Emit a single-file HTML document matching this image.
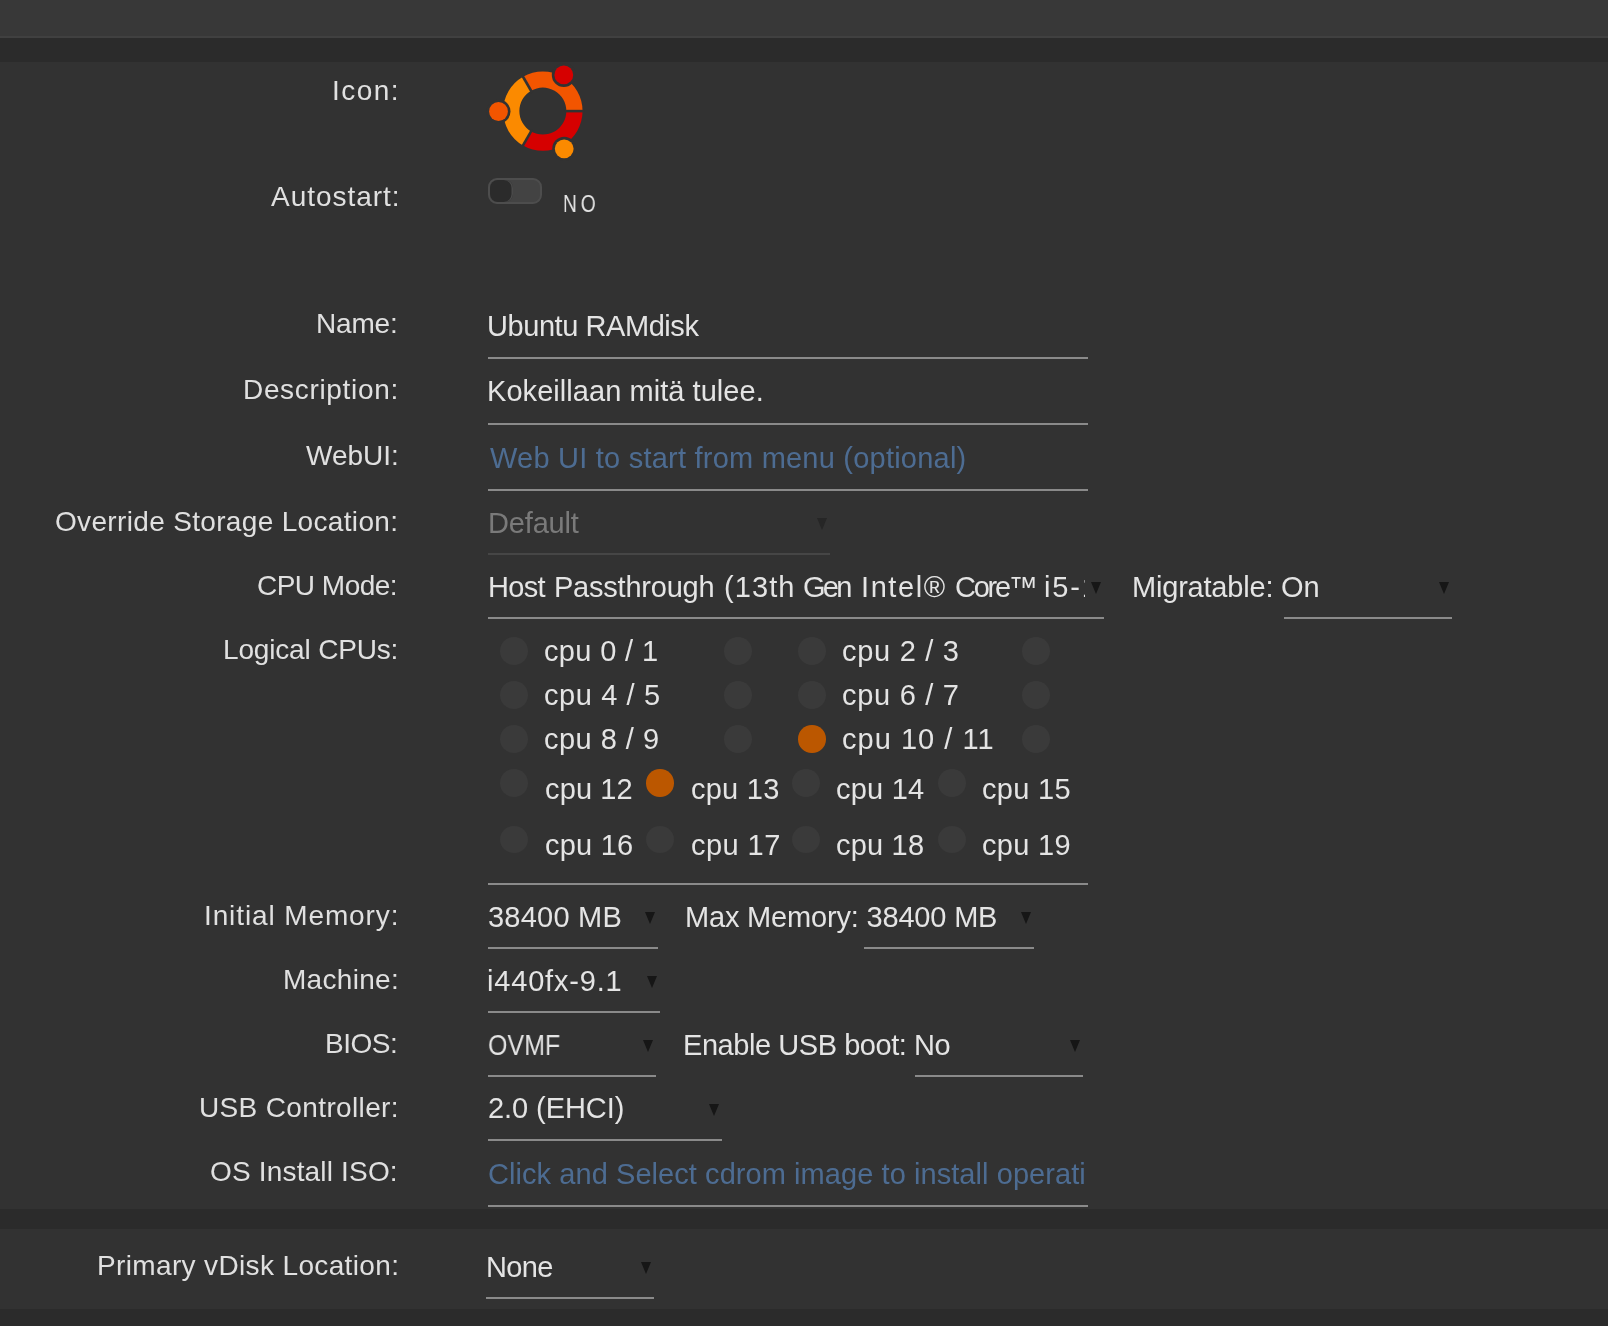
<!DOCTYPE html>
<html><head><meta charset="utf-8"><style>
html,body{margin:0;padding:0;width:1608px;height:1326px;overflow:hidden;background:#323232;}
body{position:relative;font-family:"Liberation Sans",sans-serif;}
.t{position:absolute;white-space:nowrap;line-height:1;will-change:transform;}
.r{position:absolute;box-sizing:content-box;}
.clip{position:absolute;overflow:hidden;}
</style></head><body>
<div class="r" style="left:0px;top:0px;width:1608px;height:36px;background:#383838;"></div>
<div class="r" style="left:0px;top:36px;width:1608px;height:2px;background:#404040;"></div>
<div class="r" style="left:0px;top:38px;width:1608px;height:24px;background:#2b2b2b;"></div>
<div class="r" style="left:0px;top:62px;width:1608px;height:1147px;background:#323232;"></div>
<div class="r" style="left:0px;top:1209px;width:1608px;height:20px;background:#2b2b2b;"></div>
<div class="r" style="left:0px;top:1229px;width:1608px;height:80px;background:#323232;"></div>
<div class="r" style="left:0px;top:1309px;width:1608px;height:17px;background:#2b2b2b;"></div>
<div class="t" id="l_icon" style="right:1207.94px;top:77.00px;font-size:28px;color:#e0e0e0;letter-spacing:1.465px;">Icon:</div>
<div class="t" id="l_auto" style="right:1208.00px;top:182.80px;font-size:28px;color:#e0e0e0;letter-spacing:0.965px;">Autostart:</div>
<div class="t" id="l_name" style="right:1210.08px;top:309.70px;font-size:28px;color:#e0e0e0;letter-spacing:-0.190px;">Name:</div>
<div class="t" id="l_desc" style="right:1208.81px;top:375.90px;font-size:28px;color:#e0e0e0;letter-spacing:0.666px;">Description:</div>
<div class="t" id="l_web" style="right:1208.98px;top:441.60px;font-size:28px;color:#e0e0e0;letter-spacing:-0.030px;">WebUI:</div>
<div class="t" id="l_ovr" style="right:1209.67px;top:507.70px;font-size:28px;color:#e0e0e0;letter-spacing:0.334px;">Override Storage Location:</div>
<div class="t" id="l_cpum" style="right:1210.42px;top:572.20px;font-size:28px;color:#e0e0e0;letter-spacing:-0.512px;">CPU Mode:</div>
<div class="t" id="l_lcpu" style="right:1209.62px;top:635.90px;font-size:28px;color:#e0e0e0;letter-spacing:-0.167px;">Logical CPUs:</div>
<div class="t" id="l_imem" style="right:1208.55px;top:901.60px;font-size:28px;color:#e0e0e0;letter-spacing:0.885px;">Initial Memory:</div>
<div class="t" id="l_mach" style="right:1209.18px;top:965.70px;font-size:28px;color:#e0e0e0;letter-spacing:0.292px;">Machine:</div>
<div class="t" id="l_bios" style="right:1210.45px;top:1030.40px;font-size:28px;color:#e0e0e0;letter-spacing:-0.500px;">BIOS:</div>
<div class="t" id="l_usb" style="right:1209.10px;top:1093.80px;font-size:28px;color:#e0e0e0;letter-spacing:0.360px;">USB Controller:</div>
<div class="t" id="l_iso" style="right:1209.76px;top:1157.70px;font-size:28px;color:#e0e0e0;letter-spacing:0.177px;">OS Install ISO:</div>
<div class="t" id="l_vdisk" style="right:1209.09px;top:1252.20px;font-size:28px;color:#e0e0e0;letter-spacing:0.359px;">Primary vDisk Location:</div>
<div class="t" id="v_name" style="left:487.35px;top:311.75px;font-size:29px;color:#e4e4e4;letter-spacing:-0.436px;">Ubuntu RAMdisk</div>
<div class="r" style="left:488px;top:357px;width:600px;height:2px;background:#8a8a8a;"></div>
<div class="t" id="v_desc" style="left:487.35px;top:376.65px;font-size:29px;color:#e4e4e4;letter-spacing:0.052px;">Kokeillaan mitä tulee.</div>
<div class="r" style="left:488px;top:423px;width:600px;height:2px;background:#8a8a8a;"></div>
<div class="t" id="v_web" style="left:489.55px;top:443.75px;font-size:29px;color:#4d6c92;letter-spacing:0.222px;">Web UI to start from menu (optional)</div>
<div class="r" style="left:488px;top:489px;width:600px;height:2px;background:#8a8a8a;"></div>
<div class="t" id="v_def" style="left:487.55px;top:509.05px;font-size:29px;color:#7a7a7a;letter-spacing:-0.167px;">Default</div>
<div class="r" style="left:817px;top:518px;width:0;height:0;border-left:5.5px solid transparent;border-right:5.5px solid transparent;border-top:12px solid #262626;"></div>
<div class="r" style="left:488px;top:553px;width:342px;height:2px;background:#464646;"></div>
<div class="clip" style="left:488px;top:567.45px;width:597px;height:44px;"><div class="t" style="left:0.30px;top:6px;font-size:29px;color:#e4e4e4;letter-spacing:-0.666px">Host</div><div class="t" style="left:66.40px;top:6px;font-size:29px;color:#e4e4e4;letter-spacing:-0.220px">Passthrough</div><div class="t" style="left:236.30px;top:6px;font-size:29px;color:#e4e4e4;letter-spacing:1.100px">(13th</div><div class="t" style="left:315.40px;top:6px;font-size:29px;color:#e4e4e4;letter-spacing:-2.700px">Gen</div><div class="t" style="left:372.80px;top:6px;font-size:29px;color:#e4e4e4;letter-spacing:1.580px">Intel®</div><div class="t" style="left:467.30px;top:6px;font-size:29px;color:#e4e4e4;letter-spacing:-2.250px">Core™</div><div class="t" style="left:556.10px;top:6px;font-size:29px;color:#e4e4e4;letter-spacing:1.850px">i5-13600K)</div></div>
<div class="r" style="left:1091px;top:582px;width:0;height:0;border-left:5.5px solid transparent;border-right:5.5px solid transparent;border-top:12px solid #161616;"></div>
<div class="r" style="left:488px;top:617px;width:616px;height:2px;background:#8a8a8a;"></div>
<div class="t" id="v_migr" style="left:1131.60px;top:573.25px;font-size:29px;color:#e4e4e4;letter-spacing:-0.200px;">Migratable: On</div>
<div class="r" style="left:1439px;top:582px;width:0;height:0;border-left:5.5px solid transparent;border-right:5.5px solid transparent;border-top:12px solid #161616;"></div>
<div class="r" style="left:1284px;top:617px;width:168px;height:2px;background:#8a8a8a;"></div>
<div class="r" style="left:500.40px;top:637.20px;width:27.6px;height:27.6px;border-radius:50%;background:#3a3a3a;"></div>
<div class="r" style="left:724.40px;top:637.20px;width:27.6px;height:27.6px;border-radius:50%;background:#3a3a3a;"></div>
<div class="t" id="c00" style="left:544.45px;top:637.25px;font-size:29px;color:#e4e4e4;letter-spacing:0.348px;">cpu 0 / 1</div>
<div class="r" style="left:798.40px;top:637.20px;width:27.6px;height:27.6px;border-radius:50%;background:#3a3a3a;"></div>
<div class="r" style="left:1022.40px;top:637.20px;width:27.6px;height:27.6px;border-radius:50%;background:#3a3a3a;"></div>
<div class="t" id="c01" style="left:841.80px;top:637.25px;font-size:29px;color:#e4e4e4;letter-spacing:0.713px;">cpu 2 / 3</div>
<div class="r" style="left:500.40px;top:681.20px;width:27.6px;height:27.6px;border-radius:50%;background:#3a3a3a;"></div>
<div class="r" style="left:724.40px;top:681.20px;width:27.6px;height:27.6px;border-radius:50%;background:#3a3a3a;"></div>
<div class="t" id="c10" style="left:544.45px;top:681.25px;font-size:29px;color:#e4e4e4;letter-spacing:0.598px;">cpu 4 / 5</div>
<div class="r" style="left:798.40px;top:681.20px;width:27.6px;height:27.6px;border-radius:50%;background:#3a3a3a;"></div>
<div class="r" style="left:1022.40px;top:681.20px;width:27.6px;height:27.6px;border-radius:50%;background:#3a3a3a;"></div>
<div class="t" id="c11" style="left:841.80px;top:681.25px;font-size:29px;color:#e4e4e4;letter-spacing:0.713px;">cpu 6 / 7</div>
<div class="r" style="left:500.40px;top:725.20px;width:27.6px;height:27.6px;border-radius:50%;background:#3a3a3a;"></div>
<div class="r" style="left:724.40px;top:725.20px;width:27.6px;height:27.6px;border-radius:50%;background:#3a3a3a;"></div>
<div class="t" id="c20" style="left:544.45px;top:725.35px;font-size:29px;color:#e4e4e4;letter-spacing:0.473px;">cpu 8 / 9</div>
<div class="r" style="left:798.40px;top:725.20px;width:27.6px;height:27.6px;border-radius:50%;background:#bb5700;"></div>
<div class="r" style="left:1022.40px;top:725.20px;width:27.6px;height:27.6px;border-radius:50%;background:#3a3a3a;"></div>
<div class="t" id="c21" style="left:841.80px;top:725.35px;font-size:29px;color:#e4e4e4;letter-spacing:1.030px;">cpu 10 / 11</div>
<div class="r" style="left:500.40px;top:769.20px;width:27.6px;height:27.6px;border-radius:50%;background:#3a3a3a;"></div>
<div class="t" id="d00" style="left:544.55px;top:775.25px;font-size:29px;color:#e4e4e4;letter-spacing:0.130px;">cpu 12</div>
<div class="r" style="left:646.40px;top:769.20px;width:27.6px;height:27.6px;border-radius:50%;background:#bb5700;"></div>
<div class="t" id="d01" style="left:690.55px;top:775.25px;font-size:29px;color:#e4e4e4;letter-spacing:0.240px;">cpu 13</div>
<div class="r" style="left:792.40px;top:769.20px;width:27.6px;height:27.6px;border-radius:50%;background:#3a3a3a;"></div>
<div class="t" id="d02" style="left:836.45px;top:775.25px;font-size:29px;color:#e4e4e4;letter-spacing:0.220px;">cpu 14</div>
<div class="r" style="left:938.40px;top:769.20px;width:27.6px;height:27.6px;border-radius:50%;background:#3a3a3a;"></div>
<div class="t" id="d03" style="left:982.00px;top:775.25px;font-size:29px;color:#e4e4e4;letter-spacing:0.320px;">cpu 15</div>
<div class="r" style="left:500.40px;top:825.70px;width:27.6px;height:27.6px;border-radius:50%;background:#3a3a3a;"></div>
<div class="t" id="d10" style="left:544.55px;top:831.45px;font-size:29px;color:#e4e4e4;letter-spacing:0.210px;">cpu 16</div>
<div class="r" style="left:646.40px;top:825.70px;width:27.6px;height:27.6px;border-radius:50%;background:#3a3a3a;"></div>
<div class="t" id="d11" style="left:690.55px;top:831.45px;font-size:29px;color:#e4e4e4;letter-spacing:0.440px;">cpu 17</div>
<div class="r" style="left:792.40px;top:825.70px;width:27.6px;height:27.6px;border-radius:50%;background:#3a3a3a;"></div>
<div class="t" id="d12" style="left:836.45px;top:831.45px;font-size:29px;color:#e4e4e4;letter-spacing:0.200px;">cpu 18</div>
<div class="r" style="left:938.40px;top:825.70px;width:27.6px;height:27.6px;border-radius:50%;background:#3a3a3a;"></div>
<div class="t" id="d13" style="left:982.00px;top:831.45px;font-size:29px;color:#e4e4e4;letter-spacing:0.320px;">cpu 19</div>
<div class="r" style="left:488px;top:883px;width:600px;height:2px;background:#8a8a8a;"></div>
<div class="t" id="v_imem" style="left:488.35px;top:903.15px;font-size:29px;color:#e4e4e4;letter-spacing:0.221px;">38400 MB</div>
<div class="r" style="left:645px;top:912px;width:0;height:0;border-left:5.5px solid transparent;border-right:5.5px solid transparent;border-top:12px solid #161616;"></div>
<div class="r" style="left:488px;top:947px;width:170px;height:2px;background:#8a8a8a;"></div>
<div class="t" id="v_mmem" style="left:684.65px;top:903.15px;font-size:29px;color:#e4e4e4;letter-spacing:-0.180px;">Max Memory: 38400 MB</div>
<div class="r" style="left:1021px;top:912px;width:0;height:0;border-left:5.5px solid transparent;border-right:5.5px solid transparent;border-top:12px solid #161616;"></div>
<div class="r" style="left:864px;top:947px;width:170px;height:2px;background:#8a8a8a;"></div>
<div class="t" id="v_mach" style="left:487.35px;top:966.85px;font-size:29px;color:#e4e4e4;letter-spacing:0.818px;">i440fx-9.1</div>
<div class="r" style="left:647px;top:976px;width:0;height:0;border-left:5.5px solid transparent;border-right:5.5px solid transparent;border-top:12px solid #161616;"></div>
<div class="r" style="left:488px;top:1011px;width:172px;height:2px;background:#8a8a8a;"></div>
<div class="t" id="v_bios" style="left:488.00px;top:1030.75px;font-size:29px;color:#e4e4e4;letter-spacing:0.000px;transform:scaleX(0.862);transform-origin:0 0;">OVMF</div>
<div class="r" style="left:643px;top:1040px;width:0;height:0;border-left:5.5px solid transparent;border-right:5.5px solid transparent;border-top:12px solid #161616;"></div>
<div class="r" style="left:488px;top:1075px;width:168px;height:2px;background:#8a8a8a;"></div>
<div class="t" id="v_usbb" style="left:682.65px;top:1031.45px;font-size:29px;color:#e4e4e4;letter-spacing:-0.446px;">Enable USB boot: No</div>
<div class="r" style="left:1070px;top:1040px;width:0;height:0;border-left:5.5px solid transparent;border-right:5.5px solid transparent;border-top:12px solid #161616;"></div>
<div class="r" style="left:915px;top:1075px;width:168px;height:2px;background:#8a8a8a;"></div>
<div class="t" id="v_usb" style="left:488.35px;top:1094.45px;font-size:29px;color:#e4e4e4;letter-spacing:-0.071px;">2.0 (EHCI)</div>
<div class="r" style="left:709px;top:1104px;width:0;height:0;border-left:5.5px solid transparent;border-right:5.5px solid transparent;border-top:12px solid #161616;"></div>
<div class="r" style="left:488px;top:1139px;width:234px;height:2px;background:#8a8a8a;"></div>
<div class="clip" style="left:488px;top:1153.85px;width:597px;height:44px;"><div class="t" id="v_iso" style="left:-0.45px;top:6px;font-size:29px;color:#4d6c92;letter-spacing:0.065px">Click and Select cdrom image to install operating system</div></div>
<div class="r" style="left:488px;top:1205px;width:600px;height:2px;background:#8a8a8a;"></div>
<div class="t" id="v_none" style="left:486.35px;top:1253.45px;font-size:29px;color:#e4e4e4;letter-spacing:-0.667px;">None</div>
<div class="r" style="left:641px;top:1262px;width:0;height:0;border-left:5.5px solid transparent;border-right:5.5px solid transparent;border-top:12px solid #161616;"></div>
<div class="r" style="left:486px;top:1297px;width:168px;height:2px;background:#8a8a8a;"></div>
<div class="r" style="left:488.1px;top:178.1px;width:49.7px;height:21.9px;border-radius:9px;background:#434343;border:2px solid #4d4d4d;"></div>
<div class="r" style="left:490.1px;top:180.1px;width:23px;height:21.9px;border-radius:8px;background:#2b2b2b;box-shadow:inset -1.5px 0 0 #4a4a4a;"></div>
<div class="t" id="v_no" style="left:562.80px;top:192.28px;font-size:24px;color:#e4e4e4;letter-spacing:0.000px;letter-spacing:5px;transform:scaleX(0.80);transform-origin:0 0;">NO</div>
<svg class="r" style="left:480px;top:56px" width="120" height="110" viewBox="480 56 120 110">
<path d="M582.55,111.10 A39.7,39.7 0 0 0 523.00,76.72 L531.10,90.75 A23.5,23.5 0 0 1 566.35,111.10 Z" fill="#f25500"/>
<path d="M523.00,76.72 A39.7,39.7 0 0 0 523.00,145.48 L531.10,131.45 A23.5,23.5 0 0 1 531.10,90.75 Z" fill="#fb8a00"/>
<path d="M523.00,145.48 A39.7,39.7 0 0 0 582.55,111.10 L566.35,111.10 A23.5,23.5 0 0 1 531.10,131.45 Z" fill="#d60000"/>
<line x1="564.35" y1="111.10" x2="584.55" y2="111.10" stroke="#323232" stroke-width="2.6"/>
<line x1="532.10" y1="92.48" x2="522.00" y2="74.99" stroke="#323232" stroke-width="2.6"/>
<line x1="532.10" y1="129.72" x2="522.00" y2="147.21" stroke="#323232" stroke-width="2.6"/>
<circle cx="563.80" cy="74.90" r="12.0" fill="#323232"/>
<circle cx="563.80" cy="74.90" r="9.4" fill="#d60000"/>
<circle cx="498.50" cy="111.50" r="12.0" fill="#323232"/>
<circle cx="498.50" cy="111.50" r="9.4" fill="#f25500"/>
<circle cx="564.20" cy="148.80" r="12.0" fill="#323232"/>
<circle cx="564.20" cy="148.80" r="9.4" fill="#fb8a00"/>
</svg>
</body></html>
